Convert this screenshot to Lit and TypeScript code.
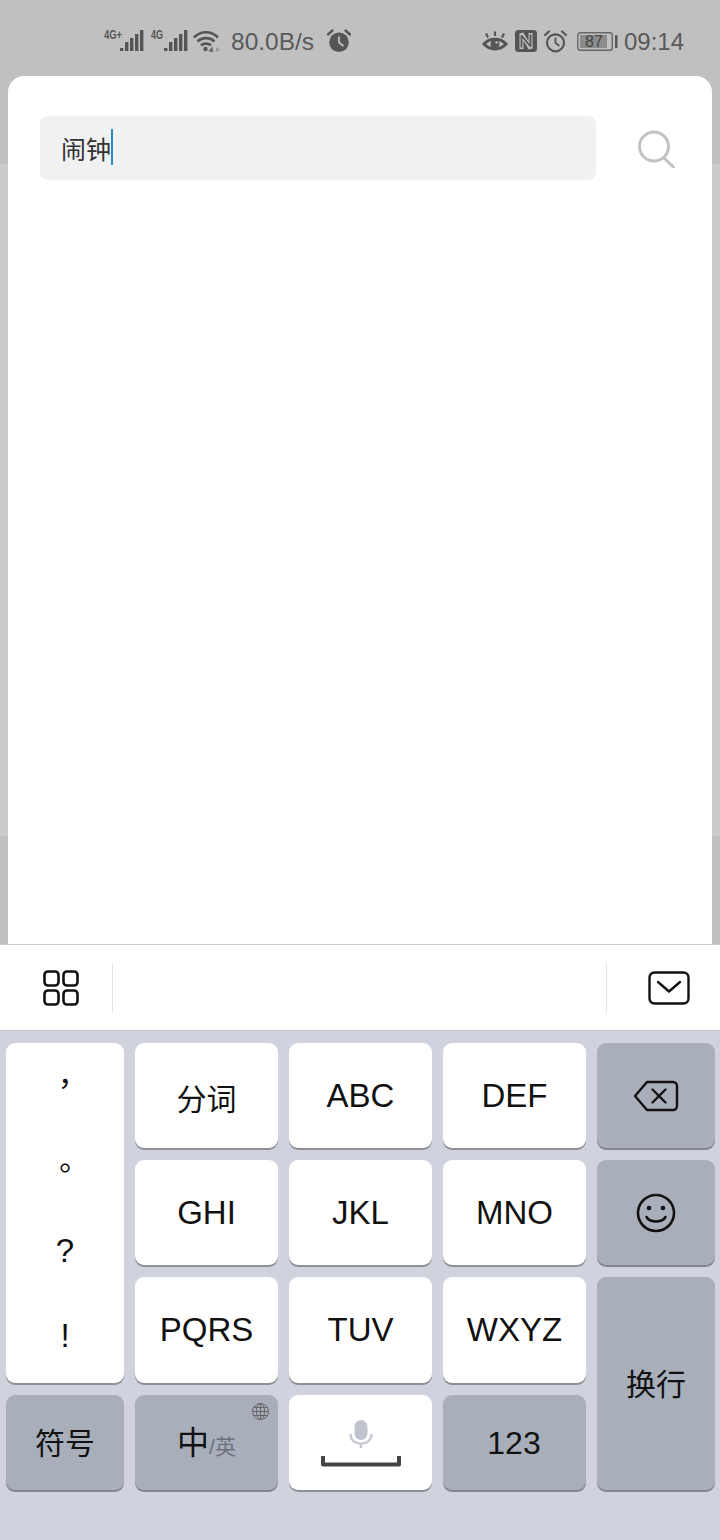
import { LitElement, html, css, svg } from "lit";
import { customElement } from "lit/decorators.js";

const bars = (x: number, tops: number[]) =>
  tops.map((t, i) => svg`<rect x=${x + i * 5} y=${t} width="3.4" height=${22 - t} fill="#555"/>`);

@customElement("app-root")
export class AppRoot extends LitElement {
  static styles = css`
    :host {
      display: block; width: 720px; height: 1540px; overflow: hidden;
      font-family: "Liberation Sans", Arial, "Noto Sans CJK SC", sans-serif;
    }
    .page {
      height: 1540px; display: flex; flex-direction: column;
      background: linear-gradient(#c0c0c0 0 164px, #cbcbcb 164px 836px, #c0c0c0 836px);
    }
    .status {
      height: 76px; box-sizing: border-box; padding: 6px 36px 0 104px; flex: none;
      display: flex; align-items: center; justify-content: space-between;
      background: #c0c0c0; color: #5a5a5a; font-size: 24px;
    }
    .group { display: flex; align-items: center; }
    .status svg { display: block; flex: none; }
    .sig2 { margin-left: 7px; }
    .wifi { margin-left: 5px; }
    .speed { margin-left: 10px; width: 83px; font-size: 24.5px; padding-top: 2px; }
    .alarm { margin-left: 13px; }
    .nfc { margin-left: 7px; }
    .alarm2 { margin-left: 7px; }
    .batt { margin-left: 10px; }
    .time { margin-left: 6px; padding-top: 2px; }
    .net { font: bold 12px "Liberation Sans", sans-serif; fill: #555; }
    .pct { font: 16px "Liberation Sans", sans-serif; fill: #444; }

    .card {
      flex: none; height: 868px; margin: 0 8px; box-sizing: border-box; background: #fff;
      border-radius: 16px 16px 0 0; padding: 40px 32px 0;
      display: flex; align-items: flex-start;
    }
    .input {
      width: 556px; height: 64px; box-sizing: border-box; background: #f1f1f2; border-radius: 8px;
      padding: 0 0 0 21px; display: flex; align-items: center;
      font-size: 25px; color: #333;
    }
    .caret { width: 2px; height: 36px; background: #2a8ad0; margin-top: -2px; }
    .search { margin: 14px 0 0 41px; display: block; }

    .toolbar {
      flex: none; height: 87px; box-sizing: border-box; background: #fff;
      border-top: 1px solid #ccc; border-bottom: 1px solid #c8c8cc;
      display: flex; align-items: center;
    }
    .tool-a { width: 112px; display: flex; justify-content: center; padding-left: 9px; box-sizing: border-box; }
    .divider { width: 1px; height: 50px; background: #e2e2e2; }
    .spacer { flex: 1; }
    .tool-b { width: 113px; display: flex; justify-content: flex-end; padding-right: 30px; box-sizing: border-box; }

    .keyboard {
      flex: 1; background: #d0d3dd; box-sizing: border-box; padding: 12px 5px 0 6px;
      display: grid; grid-template-columns: 118px 143px 143px 143px 118px; column-gap: 11px;
      grid-template-rows: 105px 105px 106px 95px; row-gap: 12px;
      align-content: start;
    }
    .key {
      border-radius: 9px; background: #fff; box-shadow: 0 2px 0 #8e9096;
      display: flex; align-items: center; justify-content: center;
      font-size: 33px; color: #111; position: relative;
    }
    .dark { background: #a8afbb; box-shadow: 0 2px 0 #83868f; }
    .cjk { font-size: 30px; padding-bottom: 4px; box-sizing: border-box; }
    .fen { padding-top: 3px; padding-bottom: 0; }
    .num { font-size: 32px; padding: 2px 1px 0 0; box-sizing: border-box; }
    .punct {
      grid-row: 1 / span 3; flex-direction: column; justify-content: flex-start; gap: 9px;
      font-family: "Noto Sans CJK TC", sans-serif;
    }
    .punct span { height: 76px; display: flex; align-items: center; justify-content: center; font-size: 30px; line-height: 44px; }
    .punct span.latin { font-family: "Liberation Sans", sans-serif; font-size: 33px; }
    .ret { grid-row: 3 / span 2; grid-column: 5; }
    .zh { align-items: baseline; padding: 22px 0 0; }
    .zh span { font-size: 32px; }
    .zh small { font-size: 21px; color: #6c7180; }
    .globe { position: absolute; top: 7px; right: 8px; display: block; }
  `;

  render() {
    return html`
      <div class="page">
        <div class="status">
          <div class="group">
            <svg width="40" height="24" viewBox="0 0 40 24">
              <text class="net" x="0" y="9.500" textLength="18" lengthAdjust="spacingAndGlyphs">4G+</text>
              ${bars(16, [19, 13, 9, 5, 1])}
            </svg>
            <svg class="sig2" width="37" height="24" viewBox="0 0 37 24">
              <text class="net" x="0" y="9.500" textLength="12" lengthAdjust="spacingAndGlyphs">4G</text>
              ${bars(13, [19, 13, 9, 5, 1])}
            </svg>
            <svg class="wifi" width="28" height="24" viewBox="0 0 28 24" fill="none" stroke="#555" stroke-width="2.600">
              <path d="M1 8.500C7.500 1.500 18.500 1.500 25 8.500"/>
              <path d="M4.500 12.500C9 8 17 8 21.500 12.500"/>
              <path d="M8 16.500C10.500 14 15.500 14 18 16.500"/>
              <circle cx="12.500" cy="20" r="2.200" fill="#555" stroke="none"/>
              <path d="M19 23v-4l-2.500 3h4" stroke-width="1.100"/>
              <path d="M23 18l4 2.500-4 2.500z" fill="#999" stroke="none"/>
            </svg>
            <span class="speed">80.0B/s</span>
            <svg class="alarm" width="24" height="24" viewBox="0 0 24 24">
              <circle cx="12" cy="13.200" r="9.800" fill="#555"/>
              <path d="M1 5.500 5.500 1.500M23 5.500 18.500 1.500" stroke="#555" stroke-width="2.400" stroke-linecap="round"/>
              <path d="M12 7.500v6l4.500 3.500" fill="none" stroke="#c0c0c0" stroke-width="1.800"/>
            </svg>
          </div>
          <div class="group">
            <svg width="26" height="20" viewBox="0 0 26 20" fill="none" stroke="#555">
              <path d="M2 13C7.500 6.500 18.500 6.500 24 13C18.500 19.500 7.500 19.500 2 13Z" stroke-width="3"/>
              <circle cx="13" cy="13" r="4.500" fill="#555" stroke="none"/>
              <circle cx="14.500" cy="11.500" r="1.200" fill="#c0c0c0" stroke="none"/>
              <path d="M4 2.500 6 6.500M13 .5v4.500M22 2.500 20 6.500" stroke-width="2.200"/>
            </svg>
            <svg class="nfc" width="22" height="22" viewBox="0 0 22 22">
              <rect width="22" height="22" rx="3.500" fill="#555"/>
              <path d="M6.500 19V3.500L15.500 18.500V3" fill="none" stroke="#c0c0c0" stroke-width="4" stroke-linejoin="bevel"/>
              <path d="M6.500 17.500V5.500L15.500 16.500V4.500" fill="none" stroke="#555" stroke-width="1.800" stroke-linejoin="bevel"/>
            </svg>
            <svg class="alarm2" width="23" height="23" viewBox="0 0 23 23" fill="none" stroke="#555" stroke-width="2.200">
              <circle cx="11.500" cy="12.800" r="8.500"/>
              <path d="M1 5 5 1.500M22 5 18 1.500" stroke-linecap="round"/>
              <path d="M11.500 7.500v5.500l4 3" stroke-width="1.800"/>
            </svg>
            <svg class="batt" width="41" height="19" viewBox="0 0 41 19">
              <rect x=".8" y=".8" width="34.500" height="17.400" rx="2.500" fill="none" stroke="#666" stroke-width="1.400"/>
              <rect x="3" y="3" width="27" height="13" fill="#8c8c8c"/>
              <rect x="38" y="3" width="2.500" height="13" rx="1" fill="#555"/>
              <text class="pct" x="17" y="15" text-anchor="middle">87</text>
            </svg>
            <span class="time">09:14</span>
          </div>
        </div>

        <div class="card">
          <div class="input"><span>闹钟</span><i class="caret"></i></div>
          <svg class="search" width="40" height="38" viewBox="0 0 40 38" fill="none" stroke="#c2c2c2" stroke-width="3">
            <circle cx="17" cy="16.500" r="14.500"/>
            <path d="M27 28l9.500 9" stroke-linecap="round"/>
          </svg>
        </div>

        <div class="toolbar">
          <div class="tool-a">
            <svg width="36" height="36" viewBox="0 0 36 36" fill="none" stroke="#111" stroke-width="2.600">
              <rect x="1.500" y="1.500" width="14" height="14" rx="3.500"/>
              <rect x="20.500" y="1.500" width="14" height="14" rx="3.500"/>
              <rect x="1.500" y="20.500" width="14" height="14" rx="3.500"/>
              <rect x="20.500" y="20.500" width="14" height="14" rx="3.500"/>
            </svg>
          </div>
          <div class="divider"></div>
          <div class="spacer"></div>
          <div class="divider"></div>
          <div class="tool-b">
            <svg width="42" height="34" viewBox="0 0 42 34" fill="none" stroke="#111" stroke-width="2.400">
              <rect x="1.500" y="1.500" width="39" height="31" rx="5"/>
              <path d="M10 11l11 9.500L32 11" stroke-linecap="round" stroke-linejoin="round"/>
            </svg>
          </div>
        </div>

        <div class="keyboard">
          <div class="key punct">
            <span>，</span><span>。</span><span class="latin">?</span><span class="latin">!</span>
          </div>
          <div class="key cjk fen">分词</div>
          <div class="key">ABC</div>
          <div class="key">DEF</div>
          <div class="key dark">
            <svg width="46" height="32" viewBox="0 0 46 32" fill="none" stroke="#111" stroke-width="2.400" stroke-linejoin="round">
              <path d="M14 2H40a4 4 0 0 1 4 4V26a4 4 0 0 1-4 4H14L2 16Z"/>
              <path d="M19.500 9.500l13 13M32.500 9.500l-13 13" stroke-linecap="round"/>
            </svg>
          </div>

          <div class="key">GHI</div>
          <div class="key">JKL</div>
          <div class="key">MNO</div>
          <div class="key dark">
            <svg width="40" height="40" viewBox="0 0 40 40" fill="none" stroke="#111" stroke-width="2.600">
              <circle cx="20" cy="20" r="18"/>
              <circle cx="13" cy="15" r="2.300" fill="#111" stroke="none"/>
              <circle cx="27" cy="15" r="2.300" fill="#111" stroke="none"/>
              <path d="M10.500 24C14 30 26 30 29.500 24" stroke-linecap="round"/>
            </svg>
          </div>

          <div class="key">PQRS</div>
          <div class="key">TUV</div>
          <div class="key">WXYZ</div>
          <div class="key dark cjk ret">换行</div>

          <div class="key dark cjk">符号</div>
          <div class="key dark cjk zh">
            <span>中</span><small>/英</small>
            <svg class="globe" width="19" height="19" viewBox="0 0 19 19" fill="none" stroke="#666" stroke-width="1">
              <circle cx="9.500" cy="9.500" r="8"/>
              <ellipse cx="9.500" cy="9.500" rx="4" ry="8"/>
              <path d="M9.500 1.500v16M1.500 9.500h16M2.500 5.500h14M2.500 13.500h14"/>
            </svg>
          </div>
          <div class="key">
            <svg width="82" height="48" viewBox="0 0 82 48" fill="none">
              <rect x="34.500" y="1" width="13" height="20" rx="6.500" fill="#bfc3cd"/>
              <path d="M30.500 15c0 13 21 13 21 0M41 24v5" stroke="#c6c9d2" stroke-width="2.400"/>
              <path d="M3 37v8.500H79V37" stroke="#444" stroke-width="4" stroke-linejoin="round"/>
            </svg>
          </div>
          <div class="key dark num">123</div>
        </div>
      </div>
    `;
  }
}
